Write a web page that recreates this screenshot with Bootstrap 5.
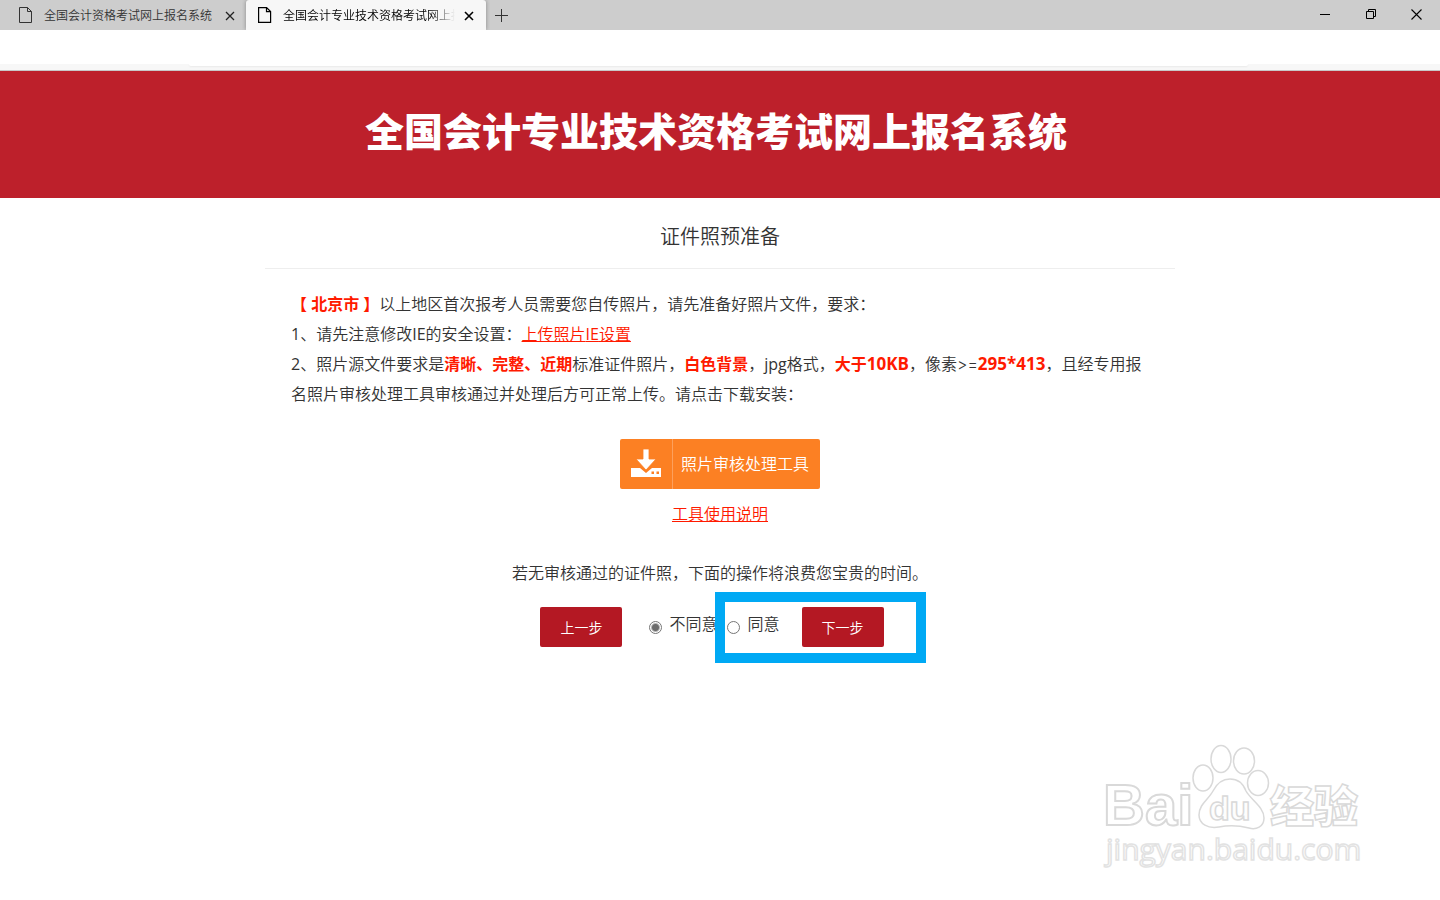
<!DOCTYPE html>
<html lang="zh-CN">
<head>
<meta charset="utf-8">
<meta name="viewport" content="width=device-width, initial-scale=1">
<title>全国会计专业技术资格考试网上报名系统</title>
<link href="https://cdn.jsdelivr.net/npm/bootstrap@5.3.0/dist/css/bootstrap.min.css" rel="stylesheet">
<style>
body { font-family: "Open Sans", "Noto Sans CJK SC", sans-serif; font-size: 16px; line-height: 30px; font-weight: 350; color: #333; background: #fff; min-height: 100vh; }
button { font: inherit; }
.tab-strip { background: #cdcdcd; height: 30px; font-size: 12px; line-height: 32px; }
.browser-tab { width: 240px; padding: 0 11px 0 12px; }
.browser-tab.first-tab { width: 246px; padding: 0 10px 0 19px; }
.browser-tab.current { background: #f7f7f7; color: #000; border-radius: 3px 3px 0 0; box-shadow: 0 0 4px #00000059; clip-path: inset(0 -4px 0 -4px); }
.tab-title { margin-left: 11px; margin-right: 8px; height: 30px; }
.current .tab-title { -webkit-mask-image: linear-gradient(to left, transparent, #000 24px); mask-image: linear-gradient(to left, transparent, #000 24px); }
.plain-btn { background: none; border: 0; padding: 0; line-height: 0; color: inherit; }
.plain-btn svg, .browser-tab svg { display: block; }
.new-tab { margin-left: 9px; }
.window-btns { gap: 35px; padding: 0 18px 2px 0; }
.toolbar { height: 41px; background: #f7f7f7; border-bottom: 1px solid #c8c8c8; }
.toolbar-top { height: 34px; }
.address-edge { height: 2px; margin: 0 192px 0 189px; border-radius: 0 0 3px 3px; box-shadow: 0 1px 2px #0000000f; }
.banner { background: #bd202b; color: #fff; padding: 30px 24px 38px 16px; }
.banner h1 { font-size: 39px; line-height: 59px; font-weight: 900; }
.sheet { max-width: 910px; }
.sheet h2 { font-size: 20px; line-height: 30px; font-weight: 350; padding: 24px 0 16px; border-bottom: 1px solid #eee; }
.notice { padding: 20px 26px 0 26px; }
.sheet b, .red-link { color: #ff1a00; }
.sheet b { font-weight: 700; }
.figures { font-size: 17px; line-height: 1; }
.latin { font-weight: 400; }
.compare { font-family: Inter, sans-serif; }
.red-link:hover { color: #c00; }
.tool { padding-top: 30px; gap: 10px; }
.tool-btn { width: 200px; height: 50px; background: #fc8023; color: #fff; border: 0; border-radius: 2px; padding: 0; }
.tool-icon { width: 53px; height: 50px; border-right: 1px solid #fda05c; }
.warn { margin-top: 29px; }
.answer { height: 40px; margin-top: 19px; padding-right: 16px; }
.step-btn { width: 82px; height: 40px; border: 0; border-radius: 2px; background: #b41823; color: #fff; font-size: 14px; line-height: 38px; padding: 2px 0 0; }
.dot { appearance: none; width: 13px; height: 13px; margin: 0 7px 0 0; border: 1px solid #767676; border-radius: 50%; background: #fff; }
.dot:checked { background: radial-gradient(circle, #6b6b6b 3px, #fff 5px); }
.answer label { height: 36px; }
.refuse { margin-left: 27px; }
.agree { margin-left: 9px; }
.agree .dot { margin-right: 8px; }
.agree label { margin-right: 22px; }
.marker { inset: -15px -42px -16px -12px; border: 10px solid #00a9f4; pointer-events: none; }
.watermark { right: 70px; bottom: 20px; pointer-events: none; }
</style>
</head>
<body class="position-relative">
<div class="tab-strip d-flex">
  <div class="browser-tab first-tab d-flex align-items-center">
    <svg width="14" height="16" viewBox="0 0 14 16" fill="none" stroke="#333"><path d="M.5 .5h8l4 4v11H.5zM8.500 .5v4h4"/></svg>
    <span class="tab-title flex-grow-1 text-nowrap overflow-hidden">全国会计资格考试网上报名系统</span>
    <button class="plain-btn" aria-label="关闭标签页"><svg width="12" height="12" viewBox="0 0 12 12" stroke="#222" stroke-width="1.300"><path d="m2 3 8 8m0-8-8 8"/></svg></button>
  </div>
  <div class="browser-tab current d-flex align-items-center">
    <svg class="flex-shrink-0" width="14" height="16" viewBox="0 0 14 16" fill="none" stroke="#000" stroke-width="1.200"><path d="M.6 .6h8l4 4v10.800H.6zM8.500 .6v4h4"/></svg>
    <span class="tab-title flex-grow-1 text-nowrap overflow-hidden">全国会计专业技术资格考试网上报名系统</span>
    <button class="plain-btn" aria-label="关闭标签页"><svg width="12" height="12" viewBox="0 0 12 12" stroke="#000" stroke-width="1.600"><path d="m2 3 8 8m0-8-8 8"/></svg></button>
  </div>
  <button class="plain-btn new-tab" aria-label="新建标签页"><svg width="13" height="13" viewBox="0 0 13 13" stroke="#333"><path d="M0 6.500h13M6.500 0v13"/></svg></button>
  <div class="window-btns ms-auto d-flex align-items-center">
    <button class="plain-btn" aria-label="最小化"><svg width="11" height="11" viewBox="0 0 11 11" stroke="#000"><path d="M1 5.500h10"/></svg></button>
    <button class="plain-btn" aria-label="还原"><svg width="11" height="11" viewBox="0 0 11 11" fill="none" stroke="#000"><path d="M1.500 2.500h7v7h-7zM3.500 2.500v-2h7v7h-2"/></svg></button>
    <button class="plain-btn" aria-label="关闭"><svg width="11" height="11" viewBox="0 0 11 11" stroke="#000" stroke-width="1.100"><path d="m.5 .5 10 10m0-10-10 10"/></svg></button>
  </div>
</div>
<div class="toolbar">
  <div class="toolbar-top bg-white"></div>
  <div class="address-edge bg-white"></div>
</div>
<header class="banner text-center"><h1 class="m-0">全国会计专业技术资格考试网上报名系统</h1></header>
<main class="sheet mx-auto">
  <h2 class="text-center m-0">证件照预准备</h2>
  <div class="notice">
    <p class="m-0"><b>【 北京市 】</b>以上地区首次报考人员需要您自传照片，请先准备好照片文件，要求：</p>
    <p class="m-0"><span class="latin">1</span>、请先注意修改<span class="latin">IE</span>的安全设置：<a href="#" class="red-link">上传照片<span class="latin">IE</span>设置</a></p>
    <p class="m-0"><span class="latin">2</span>、照片源文件要求是<b>清晰、完整、近期</b>标准证件照片，<b>白色背景</b>，<span class="latin">jpg</span>格式，<b>大于<span class="figures">10KB</span></b>，像素<span class="compare">&gt;=</span><b class="figures">295*413</b>，且经专用报名照片审核处理工具审核通过并处理后方可正常上传。请点击下载安装：</p>
  </div>
  <div class="tool d-flex flex-column align-items-center">
    <button class="tool-btn d-flex align-items-center">
      <span class="tool-icon d-flex align-items-center justify-content-center"><svg width="30" height="30" viewBox="0 0 30 30" fill="#fff"><path d="M0 19h9l6 5 6-5h9v9H0z"/><path d="M12 0h6v10h7L15 21 5 10h7z" stroke="#fc8023" stroke-width=".8"/><path d="M20.500 22.500h2.500v2.500h-2.500zM25.500 22.500H28v2.500h-2.500z" fill="#fc8023"/></svg></span>
      <span class="flex-grow-1 ps-2 text-start">照片审核处理工具</span>
    </button>
    <a href="#" class="red-link">工具使用说明</a>
  </div>
  <p class="warn text-center mb-0">若无审核通过的证件照，下面的操作将浪费您宝贵的时间。</p>
  <form class="answer d-flex justify-content-center align-items-center">
    <button type="button" class="step-btn">上一步</button>
    <div class="refuse d-flex align-items-center"><input class="dot" type="radio" name="consent" id="no" checked><label for="no">不同意</label></div>
    <div class="agree d-flex align-items-center position-relative"><input class="dot" type="radio" name="consent" id="yes"><label for="yes">同意</label><button type="button" class="step-btn">下一步</button><span class="marker position-absolute"></span></div>
  </form>
</main>
<svg class="watermark position-absolute" width="270" height="140" viewBox="0 0 270 140" fill="#fff" stroke="#d9d9d9" stroke-width="1.500">
  <text x="3" y="85" font-family="Liberation Sans, sans-serif" font-weight="700" font-size="58" stroke-width="2">Bai</text>
  <ellipse cx="103" cy="38" rx="10" ry="13"/><ellipse cx="121" cy="19" rx="10" ry="13.500"/><ellipse cx="144" cy="21" rx="10.500" ry="13"/><ellipse cx="158" cy="43" rx="10.500" ry="12.500"/>
  <path d="M113 51c4-8 9-12 17-12s13 4 16 12c5 9 18 16 18 27 0 9-8 12-15 10-12-3-20-3-30-1-11 2-20-3-20-12 0-11 10-16 14-24z"/>
  <text x="109" y="80" font-family="Liberation Sans, sans-serif" font-weight="700" font-size="34" fill="#fdfdfd">du</text>
  <text x="170" y="83" font-family="Noto Sans CJK SC, sans-serif" font-weight="900" font-size="44">经验</text>
  <text x="6" y="120" font-family="Open Sans, sans-serif" font-weight="400" font-size="30" stroke="#e2e2e2">jingyan.baidu.com</text>
</svg>
<script src="https://cdn.jsdelivr.net/npm/bootstrap@5.3.0/dist/js/bootstrap.bundle.min.js"></script>
</body>
</html>
